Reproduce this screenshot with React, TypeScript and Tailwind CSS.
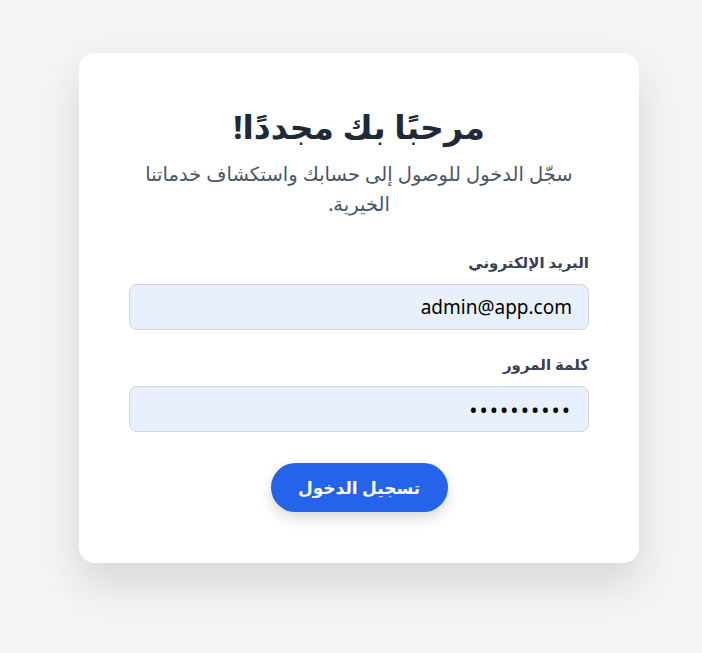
import React from "react";

export default function App() {
  return (
    <div
      dir="rtl"
      className="min-h-screen bg-[#f3f4f6] pt-[53px] pr-[63px]"
      style={{ fontFamily: '"Noto Sans", "DejaVu Sans", sans-serif' }}
    >
      <div className="w-[560px] rounded-2xl bg-white px-[50px] pt-[50px] pb-[51px] shadow-[0_20px_40px_rgba(0,0,0,0.12)]">
        <div className="text-center">
          <h1 className="text-[33px] font-bold leading-[48px] text-[#1f2937]">مرحبًا بك مجددًا!</h1>
          <p className="mx-auto mt-2 w-[460px] text-[19.5px] leading-[30px] text-[#4b5563]">
            سجّل الدخول للوصول إلى حسابك واستكشاف خدماتنا الخيرية.
          </p>
        </div>
        <div className="mt-[31px]">
          <label className="block text-[15px] font-semibold leading-6 text-[#374151]">البريد الإلكتروني</label>
          <input
            type="email"
            defaultValue="admin@app.com"
            className="mt-[10px] h-[46px] w-full rounded-lg border border-[#d1d5db] bg-[#e8f0fe] px-4 text-[19px] text-black outline-none"
          />
        </div>
        <div className="mt-[22px]">
          <label className="block text-[15px] font-semibold leading-6 text-[#374151]">كلمة المرور</label>
          <input
            type="password"
            defaultValue="1234567890"
            className="mt-[10px] h-[46px] w-full rounded-lg border border-[#d1d5db] bg-[#e8f0fe] px-4 text-[22px] tracking-[2px] text-black outline-none"
          />
        </div>
        <div className="mt-[31px] flex justify-center">
          <button className="h-[49px] w-[177px] rounded-full bg-[#2563eb] text-[17px] font-bold text-white shadow-[0_6px_14px_rgba(0,0,0,0.15)]">
            تسجيل الدخول
          </button>
        </div>
      </div>
    </div>
  );
}
